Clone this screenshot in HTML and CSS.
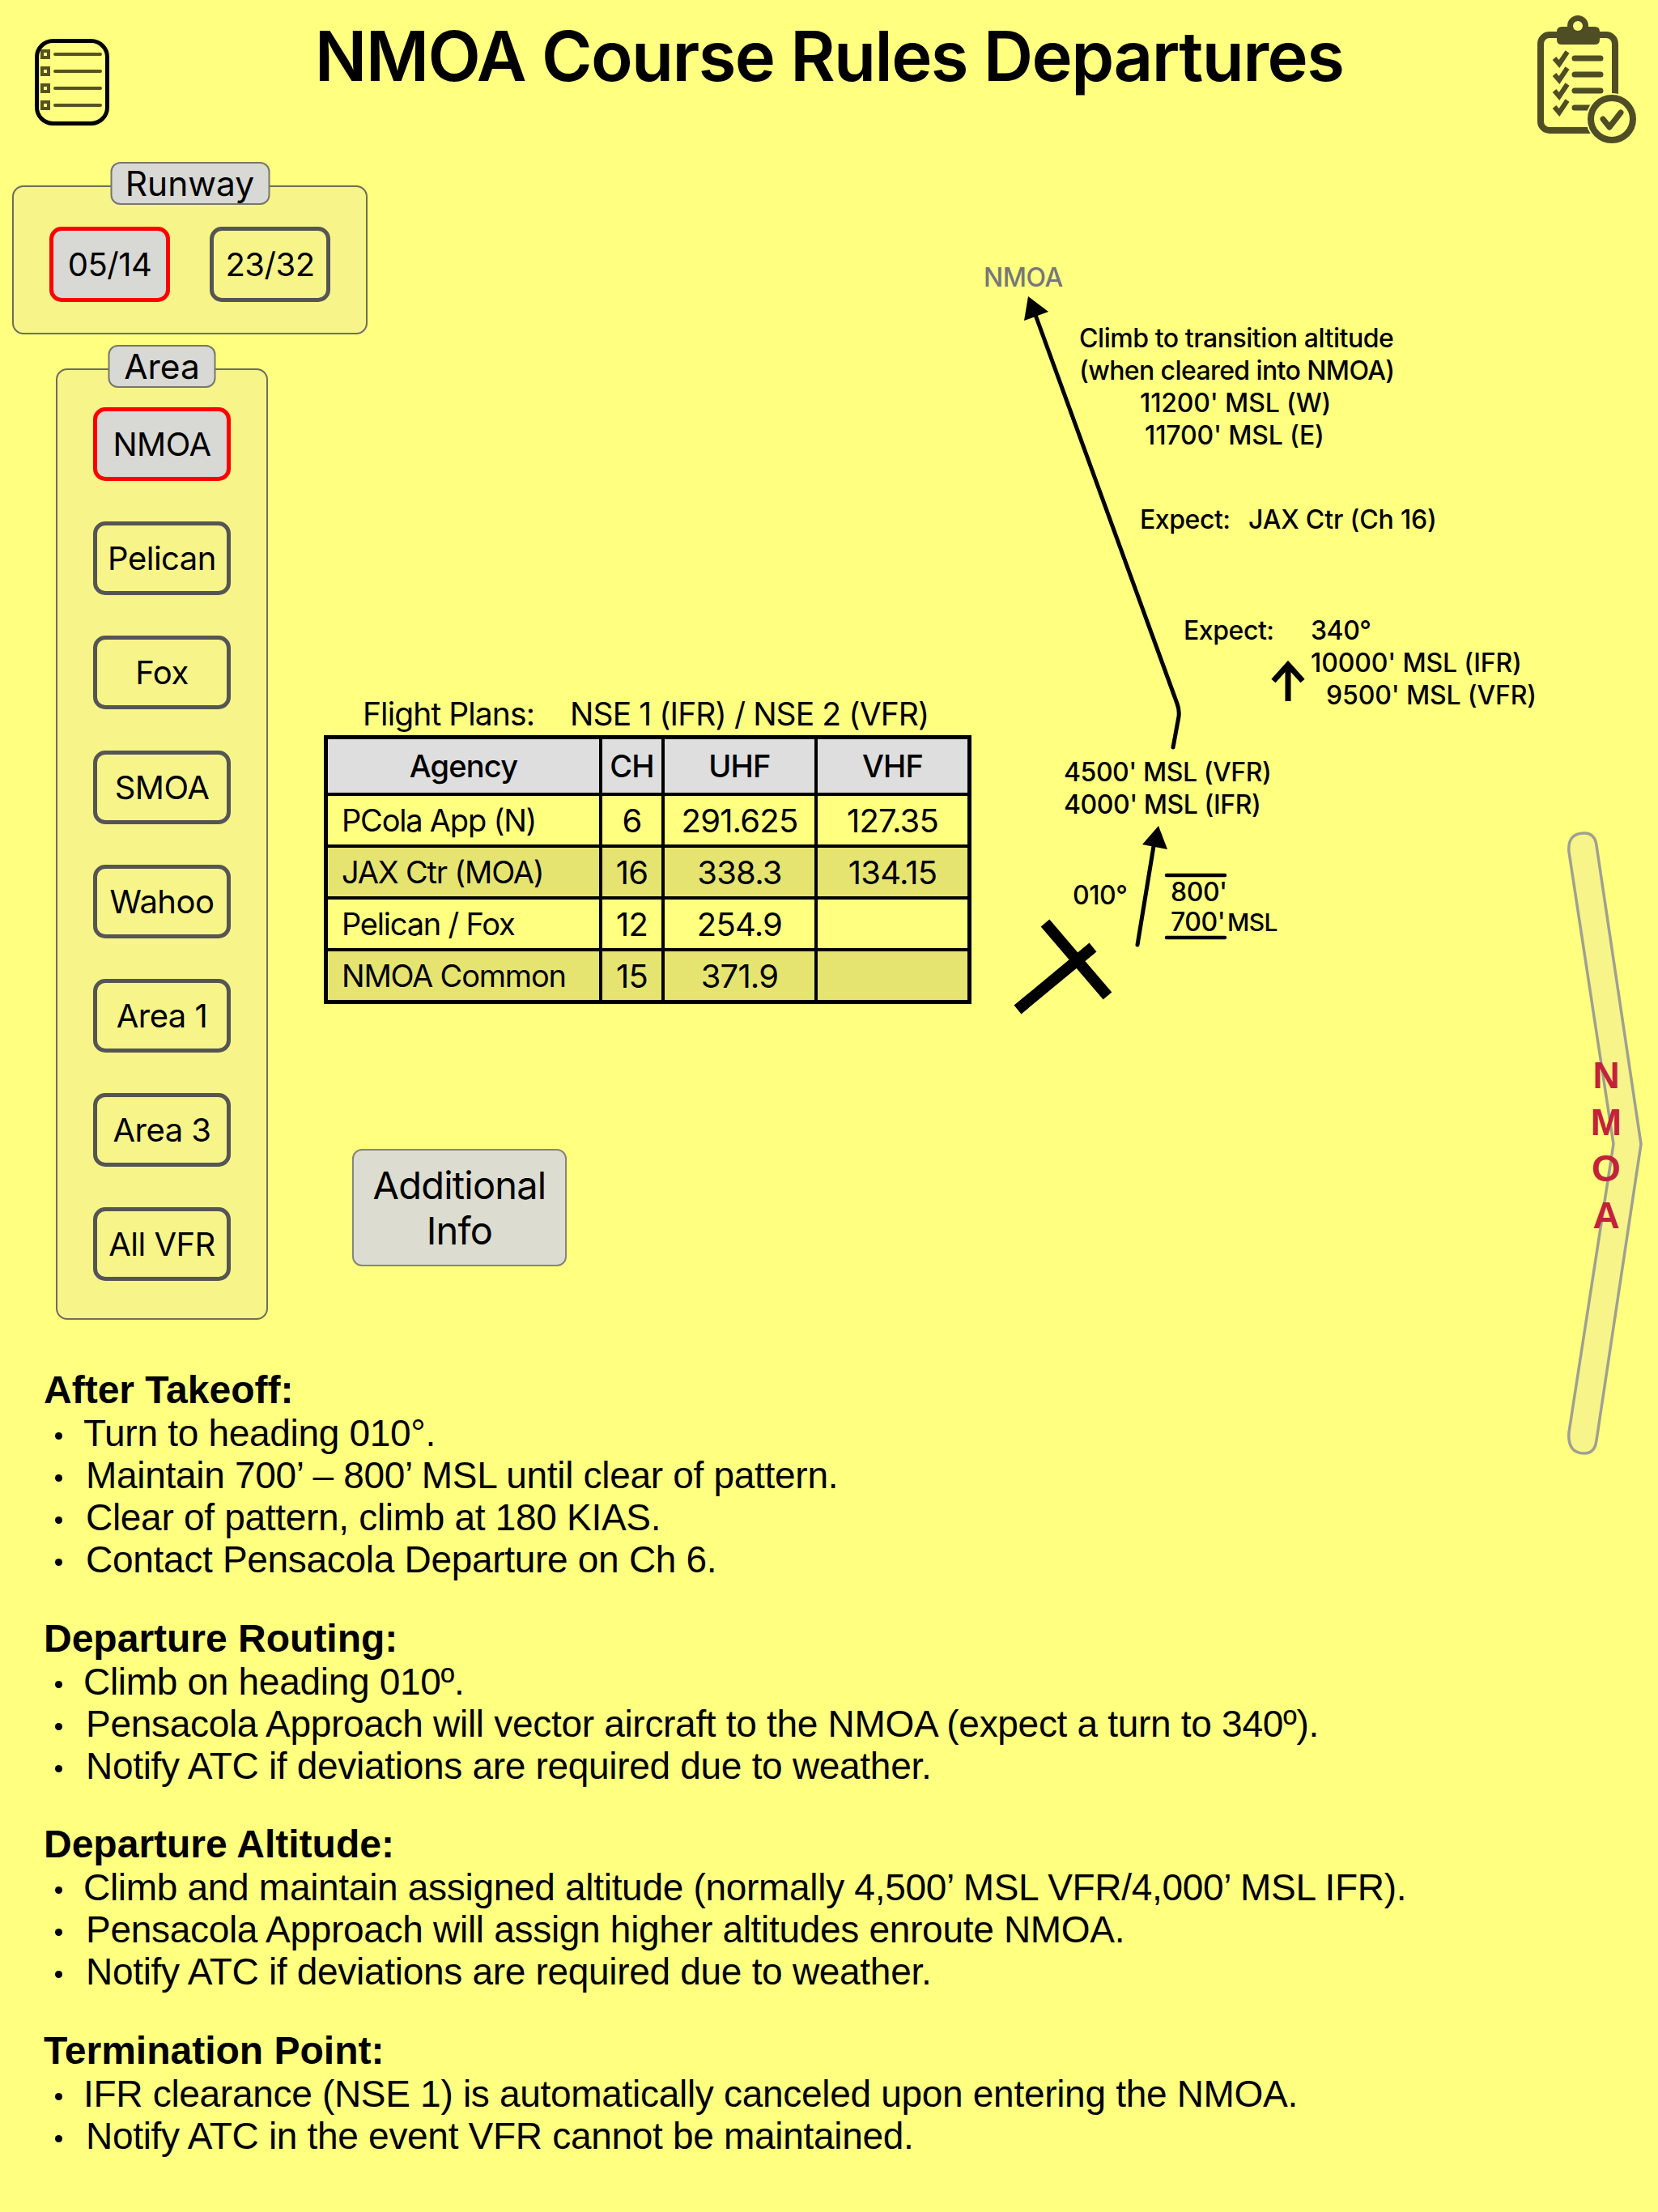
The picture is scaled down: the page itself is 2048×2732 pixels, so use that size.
FILE: index.html
```html
<!DOCTYPE html>
<html>

<head>
  <title>NMOA Course Rules Departures</title>
  <link rel="stylesheet" href="styles.css">
</head>

<body>

  <header>
    <svg class="list-icon" viewBox="40 45 98 113">
      <rect class="list-frame" x="45.5" y="50.5" width="87" height="102" rx="20" />
      <g class="list-marks">
        <rect x="52" y="63" width="8" height="8" />
        <rect x="52" y="84" width="8" height="8" />
        <rect x="52" y="105" width="8" height="8" />
        <rect x="52" y="126" width="8" height="8" />
        <path d="M68 67H124M68 88H124M68 109H124M68 130H124" />
      </g>
    </svg>
    <h1>NMOA Course Rules Departures</h1>
    <svg class="check-icon" viewBox="1890 15 135 165">
      <g class="check-ink">
        <rect class="board" x="1903" y="43" width="92" height="118" rx="11" />
        <circle class="clip" cx="1949" cy="32" r="13" />
        <path class="clip" d="M1923 39q0-6 6-6h41q6 0 6 6v10q0 6-6 6h-41q-6 0-6-6z" />
        <circle class="clip-hole" cx="1949" cy="32" r="6" />
        <path d="M1920 72l6 7 10-15M1920 92l6 7 10-15M1920 112l6 7 10-15M1920 132l6 7 10-15" />
        <path class="bars" d="M1945 72H1977M1945 92H1977M1945 112H1977M1945 133H1977" />
        <circle class="halo" cx="1991" cy="147" r="32" />
        <circle class="ring" cx="1991" cy="147" r="26" />
        <path class="bars" d="M1980 147l8 10 14-18" />
      </g>
    </svg>
  </header>

  <main>
    <section class="panel runway">
      <h2>Runway</h2>
      <button class="pick on">05/14</button>
      <button class="pick">23/32</button>
    </section>

    <div class="lower">
      <section class="panel area">
        <h2>Area</h2>
        <button class="pick on">NMOA</button>
        <button class="pick">Pelican</button>
        <button class="pick">Fox</button>
        <button class="pick">SMOA</button>
        <button class="pick">Wahoo</button>
        <button class="pick">Area 1</button>
        <button class="pick">Area 3</button>
        <button class="pick">All VFR</button>
      </section>

      <div class="freqs">
        <p class="plans">Flight Plans:<span>NSE 1 (IFR) / NSE 2 (VFR)</span></p>
        <table>
          <tr>
            <th class="wide">Agency</th>
            <th class="ch">CH</th>
            <th class="uhf">UHF</th>
            <th>VHF</th>
          </tr>
          <tr>
            <td class="wide">PCola App (N)</td>
            <td>6</td>
            <td>291.625</td>
            <td>127.35</td>
          </tr>
          <tr>
            <td class="wide">JAX Ctr (MOA)</td>
            <td>16</td>
            <td>338.3</td>
            <td>134.15</td>
          </tr>
          <tr>
            <td class="wide">Pelican / Fox</td>
            <td>12</td>
            <td>254.9</td>
            <td></td>
          </tr>
          <tr>
            <td class="wide">NMOA Common</td>
            <td>15</td>
            <td>371.9</td>
            <td></td>
          </tr>
        </table>
        <button class="more">Additional<br>Info</button>
      </div>
    </div>

    <section class="notes">
      <h3>After Takeoff:</h3>
      <ul>
        <li class="first">Turn to heading 010°.</li>
        <li>Maintain 700’ – 800’ MSL until clear of pattern.</li>
        <li>Clear of pattern, climb at 180 KIAS.</li>
        <li>Contact Pensacola Departure on Ch 6.</li>
      </ul>
      <h3>Departure Routing:</h3>
      <ul>
        <li class="first">Climb on heading 010º.</li>
        <li>Pensacola Approach will vector aircraft to the NMOA (expect a turn to 340º).</li>
        <li>Notify ATC if deviations are required due to weather.</li>
      </ul>
      <h3>Departure Altitude:</h3>
      <ul>
        <li class="first">Climb and maintain assigned altitude (normally 4,500’ MSL VFR/4,000’ MSL IFR).</li>
        <li>Pensacola Approach will assign higher altitudes enroute NMOA.</li>
        <li>Notify ATC if deviations are required due to weather.</li>
      </ul>
      <h3>Termination Point:</h3>
      <ul>
        <li class="first">IFR clearance (NSE 1) is automatically canceled upon entering the NMOA.</li>
        <li>Notify ATC in the event VFR cannot be maintained.</li>
      </ul>
    </section>
  </main>

  <!-- route diagram, coordinates are page pixels -->
  <svg class="chart" viewBox="1200 300 848 1520">
    <path class="moa" d="M1938 1052Q1936 1029 1957 1029Q1970 1029 1972 1044L2027 1413L1972 1779Q1970 1795 1957 1795Q1936 1795 1938 1769L1993 1413Z" />
    <g class="moa-name">
      <text x="1984" y="1344">N</text>
      <text x="1984" y="1402">M</text>
      <text x="1984" y="1459">O</text>
      <text x="1984" y="1517">A</text>
    </g>

    <path class="route" d="M1449 923L1456 885Q1457 877 1454 869L1275 378" />
    <path class="head" d="M1270 366L1295 385L1265 396Z" />
    <path class="route" d="M1405 1167L1425 1045" />
    <path class="head" d="M1431 1020L1411 1043L1442 1049Z" />
    <path class="up" d="M1591 866V820M1573 841L1591 821L1609 841" />
    <path class="limit" d="M1441 1081H1513M1441 1158H1513" />
    <path class="rwy" d="M1291 1140L1368 1230M1257 1247L1350 1170" />

    <text class="far" x="1215" y="354">NMOA</text>
    <text x="1333" y="429">Climb to transition altitude</text>
    <text class="tight" x="1333" y="469">(when cleared into NMOA)</text>
    <text class="alt" x="1408" y="509">11200' MSL (W)</text>
    <text class="alt" x="1414" y="549">11700' MSL (E)</text>
    <text x="1408" y="653">Expect:</text>
    <text class="alt" x="1542" y="653">JAX Ctr (Ch 16)</text>
    <text x="1462" y="790">Expect:</text>
    <text x="1619" y="790">340°</text>
    <text class="alt" x="1619" y="830">10000' MSL (IFR)</text>
    <text class="alt" x="1638" y="870">9500' MSL (VFR)</text>
    <text x="1314" y="965">4500' MSL (VFR)</text>
    <text x="1314" y="1005">4000' MSL (IFR)</text>
    <text x="1325" y="1117">010°</text>
    <text x="1446" y="1113">800'</text>
    <text x="1446" y="1150">700'</text>
    <text class="unit" x="1516" y="1150">MSL</text>
  </svg>

</body>

</html>
```

FILE: styles.css
```css
body {
  margin: 0;
  width: 2048px;
  height: 2732px;
  position: relative;
  overflow: hidden;
  background-color: #ffff80;
  font-family: Inter, "Liberation Sans", sans-serif;
  color: #000;
}

header {
  height: 229px;
  display: grid;
  grid-template-columns: 1fr auto 1fr;
  align-items: start;
}

h1 {
  margin: 18px 0 0;
  font-size: 85px;
  line-height: 103px;
  font-weight: 600;
  letter-spacing: -1.6px;
}

.list-icon {
  width: 98px;
  height: 113px;
  margin: 45px 0 0 40px;
}

.list-frame {
  fill: none;
  stroke: #000;
  stroke-width: 5;
}

.list-marks {
  fill: none;
  stroke: #55531f;
  stroke-width: 4;
  stroke-linecap: round;
}

.check-icon {
  width: 135px;
  height: 165px;
  margin-top: 15px;
  justify-self: end;
  margin-right: 23px;
}

.check-ink {
  fill: none;
  stroke: #4f4d24;
  stroke-width: 6;
}

.board {
  stroke-width: 8;
}

.clip {
  fill: #4f4d24;
  stroke: none;
}

.clip-hole {
  fill: #ffff80;
  stroke: none;
}

.bars {
  stroke-width: 7;
  stroke-linecap: round;
  stroke-linejoin: round;
}

.halo {
  fill: #ffff80;
  stroke: none;
}

.ring {
  stroke-width: 8;
}

main {
  padding-left: 15px;
}

.panel {
  position: relative;
  box-sizing: border-box;
  background-color: #f7f48a;
  border: 2px solid #6e6e5a;
  border-radius: 14px;
}

.panel h2 {
  position: absolute;
  top: -31px;
  left: 50%;
  transform: translateX(-50%);
  box-sizing: border-box;
  height: 53px;
  margin: 0;
  background-color: #d8d8d4;
  border: 2px solid #77776e;
  border-radius: 12px;
  text-align: center;
  font-size: 42.5px;
  line-height: 49px;
  font-weight: 400;
}

.runway {
  width: 439px;
  height: 184px;
  padding: 49px 44px 0;
  display: flex;
  justify-content: space-between;
}

.runway h2 {
  width: 197px;
}

.pick {
  box-sizing: border-box;
  display: block;
  padding: 0;
  background-color: transparent;
  border: 5px solid #555;
  border-radius: 15px;
  font-family: inherit;
  font-size: 40px;
  letter-spacing: -0.5px;
  color: #000;
}

.pick.on {
  background-color: #d8d8d4;
  border-color: #f00;
}

.runway .pick {
  width: 149px;
  height: 93px;
}

.lower {
  display: flex;
  margin: 42px 0 0 54px;
}

.area {
  width: 262px;
  height: 1175px;
  padding-top: 46px;
  display: flex;
  flex-direction: column;
  align-items: center;
  gap: 50.2px;
}

.area h2 {
  width: 133px;
}

.area .pick {
  width: 170px;
  height: 91px;
}

.freqs {
  margin-left: 69px;
  padding-top: 404px;
}

.plans {
  margin: 0;
  height: 49px;
  padding-left: 48px;
  font-size: 39px;
  line-height: 46px;
  letter-spacing: -0.9px;
  white-space: nowrap;
}

.plans span {
  margin-left: 44px;
}

table {
  width: 800px;
  border-collapse: collapse;
  border: 5px solid #000;
  table-layout: fixed;
  font-size: 40px;
  letter-spacing: -0.8px;
}

th,
td {
  padding: 0;
  border: 4px solid #000;
  text-align: center;
  font-weight: 400;
}

th {
  height: 66px;
  background-color: #dedede;
  font-size: 38px;
  font-weight: 500;
}

td {
  height: 60px;
}

th.wide {
  width: 335px;
}

th.ch {
  width: 73px;
}

th.uhf {
  width: 185px;
}

td.wide {
  padding-left: 17px;
  text-align: left;
  font-size: 38px;
  letter-spacing: -1.2px;
}

tr:nth-child(odd) td {
  background-color: #e6e470;
}

.more {
  display: block;
  box-sizing: border-box;
  width: 265px;
  height: 145px;
  margin: 179px 0 0 35px;
  padding: 0;
  background-color: #dcdcd0;
  border: 2px solid #85857c;
  border-radius: 12px;
  font-family: inherit;
  font-size: 47px;
  line-height: 56px;
  letter-spacing: -0.8px;
  color: #000;
}

.notes {
  margin: 61px 0 0 39px;
  font-family: "Liberation Sans", Arial, sans-serif;
  font-size: 46px;
  line-height: 52px;
}

.notes h3 {
  margin: 0;
  font-size: 48px;
  font-weight: 700;
}

.notes ul {
  margin: 1px 0 45.5px;
  padding: 0;
  list-style: none;
  letter-spacing: -0.3px;
}

.notes li {
  position: relative;
  padding-left: 52px;
}

.notes li::before {
  content: "";
  position: absolute;
  left: 14px;
  top: 25px;
  width: 9px;
  height: 9px;
  border-radius: 50%;
  background-color: #000;
}

.notes li.first {
  padding-left: 49px;
}

.chart {
  position: absolute;
  left: 1200px;
  top: 300px;
  width: 848px;
  height: 1520px;
}

.chart text {
  font-family: Inter, "Liberation Sans", sans-serif;
  font-size: 32px;
  font-weight: 500;
  letter-spacing: -0.45px;
}

.chart .far {
  fill: #777;
}

.chart .alt {
  letter-spacing: -0.15px;
}

.chart .tight {
  letter-spacing: -0.6px;
}

.chart .unit {
  font-size: 30px;
  letter-spacing: -0.6px;
}

.chart .moa-name text {
  font-family: "Liberation Sans", Arial, sans-serif;
  font-size: 46px;
  font-weight: 700;
  letter-spacing: 0;
  fill: #c4213a;
  text-anchor: middle;
}

.moa {
  fill: #f7f48a;
  stroke: #a0a090;
  stroke-width: 3.5;
}

.route {
  fill: none;
  stroke: #000;
  stroke-width: 5;
  stroke-linecap: round;
}

.head {
  fill: #000;
}

.up {
  fill: none;
  stroke: #000;
  stroke-width: 7;
}

.limit {
  fill: none;
  stroke: #000;
  stroke-width: 4.5;
  stroke-linecap: round;
}

.rwy {
  fill: none;
  stroke: #000;
  stroke-width: 14;
}
```
